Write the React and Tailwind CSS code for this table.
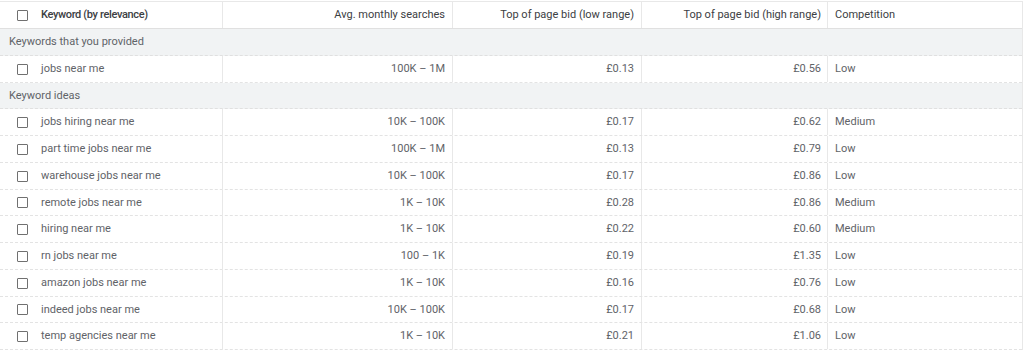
import React from "react";

const provided = [["jobs near me", "100K – 1M", "£0.13", "£0.56", "Low"]];
const ideas = [
  ["jobs hiring near me", "10K – 100K", "£0.17", "£0.62", "Medium"],
  ["part time jobs near me", "100K – 1M", "£0.13", "£0.79", "Low"],
  ["warehouse jobs near me", "10K – 100K", "£0.17", "£0.86", "Low"],
  ["remote jobs near me", "1K – 10K", "£0.28", "£0.86", "Medium"],
  ["hiring near me", "1K – 10K", "£0.22", "£0.60", "Medium"],
  ["rn jobs near me", "100 – 1K", "£0.19", "£1.35", "Low"],
  ["amazon jobs near me", "1K – 10K", "£0.16", "£0.76", "Low"],
  ["indeed jobs near me", "10K – 100K", "£0.17", "£0.68", "Low"],
  ["temp agencies near me", "1K – 10K", "£0.21", "£1.06", "Low"],
];

const cols = "grid grid-cols-[223px_230px_189px_186px_1fr]";

function Box() {
  return <span className="inline-block w-[11px] h-[11px] border border-[#707070] rounded-[1px] bg-white shrink-0" />;
}

function Row({ r }) {
  return (
    <div className={`${cols} h-[26.75px] border-b border-dashed border-[#e3e3e3] text-[#5f6368]`}>
      <div className="flex items-center pl-[17px] gap-[13px] border-r border-[#e8e8e8] pt-[1px]">
        <Box />
        <span>{r[0]}</span>
      </div>
      <div className="flex items-center justify-end pr-[7px] border-r border-[#e8e8e8] pt-[1px]">{r[1]}</div>
      <div className="flex items-center justify-end pr-[7px] border-r border-[#e8e8e8] pt-[1px]">{r[2]}</div>
      <div className="flex items-center justify-end pr-[6px] border-r border-[#e8e8e8] pt-[1px]">{r[3]}</div>
      <div className="flex items-center pl-[7px] pt-[1px]">{r[4]}</div>
    </div>
  );
}

function Section({ label }) {
  return (
    <div className="h-[26.75px] flex items-center pl-[9px] pt-[1px] bg-[#f1f3f4] border-b border-dashed border-[#e0e0e0] text-[#5f6368]">
      {label}
    </div>
  );
}

export default function App() {
  return (
    <div className="w-[1024px] h-[353px] bg-white pt-[1px]" style={{ fontFamily: "Roboto, 'Liberation Sans', sans-serif" }}>
      <div className="w-[1023px] border-t border-r border-[#e8e8e8] text-[11px]">
        <div className={`${cols} h-[27px] border-b border-[#e0e0e0] text-[#3c4043]`}>
          <div className="flex items-center pl-[17px] gap-[13px] border-r border-[#e8e8e8] pt-[1px]">
            <Box />
            <span className="font-medium text-[#3c4043] tracking-[-0.35px]">Keyword (by relevance)</span>
          </div>
          <div className="flex items-center justify-end pr-[7px] border-r border-[#e8e8e8] pt-[1px]">Avg. monthly searches</div>
          <div className="flex items-center justify-end pr-[7px] border-r border-[#e8e8e8] pt-[1px]">Top of page bid (low range)</div>
          <div className="flex items-center justify-end pr-[6px] border-r border-[#e8e8e8] pt-[1px]">Top of page bid (high range)</div>
          <div className="flex items-center pl-[7px] pt-[1px]">Competition</div>
        </div>
        <Section label="Keywords that you provided" />
        {provided.map((r) => <Row key={r[0]} r={r} />)}
        <Section label="Keyword ideas" />
        {ideas.map((r) => <Row key={r[0]} r={r} />)}
      </div>
    </div>
  );
}
